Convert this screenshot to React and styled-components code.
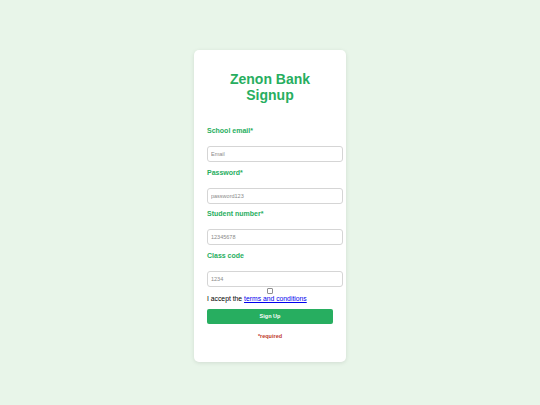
import React from "react";
import styled, { createGlobalStyle } from "styled-components";

const Global = createGlobalStyle`
  html, body { margin: 0; padding: 0; }
  body {
    background: #e8f5e9;
    font-family: "Liberation Sans", Arial, sans-serif;
    width: 540px;
    height: 405px;
    overflow: hidden;
  }
`;

const Page = styled.div`
  display: flex;
  justify-content: center;
  padding-top: 50px;
`;

const Card = styled.form`
  width: 126px;
  padding: 21px 13px 22px;
  background: #ffffff;
  border-radius: 5px;
  box-shadow: 0 1px 4px rgba(0, 0, 0, 0.1);
`;

const Title = styled.h1`
  margin: 0 0 23px;
  text-align: center;
  color: #27ae60;
  font-size: 14px;
  line-height: 16px;
  font-weight: bold;
`;

const Label = styled.label`
  display: block;
  color: #27ae60;
  font-size: 7px;
  line-height: 10px;
  font-weight: bold;
  margin-bottom: 10px;
`;

const Field = styled.input`
  display: block;
  box-sizing: content-box;
  width: 128px;
  height: 14px;
  padding: 0 3px;
  margin: 0 0 5.7px;
  border: 1px solid #d5d5d5;
  border-radius: 3px;
  font-family: "Liberation Sans", Arial, sans-serif;
  font-size: 5.5px;
  color: #333;
  &::placeholder { color: #8a8a8a; }
`;

const CheckRow = styled.div`
  display: flex;
  justify-content: center;
  margin-top: -5px;
  height: 6px;
`;

const Check = styled.input`
  appearance: none;
  -webkit-appearance: none;
  box-sizing: border-box;
  width: 6px;
  height: 6px;
  margin: 0;
  padding: 0;
  border: 1px solid #8f8f8f;
  border-radius: 1px;
  background: #fff;
`;

const Accept = styled.div`
  font-size: 6.8px;
  line-height: 9px;
  font-weight: normal;
  color: #000;
  margin: 0 0 6px;
  a { color: #0000ee; text-decoration: underline; }
`;

const Button = styled.button`
  display: block;
  width: 126px;
  height: 15px;
  border: none;
  border-radius: 2px;
  background: #27ae60;
  color: #fff;
  font-family: "Liberation Sans", Arial, sans-serif;
  font-size: 5.5px;
  font-weight: bold;
  padding: 0;
`;

const Required = styled.div`
  margin-top: 9px;
  text-align: center;
  color: #c0392b;
  font-size: 5.5px;
  line-height: 7px;
  font-weight: bold;
`;

const fields = [
  { label: "School email*", placeholder: "Email" },
  { label: "Password*", placeholder: "password123" },
  { label: "Student number*", placeholder: "12345678" },
  { label: "Class code", placeholder: "1234" },
];

export default function App() {
  return (
    <>
      <Global />
      <Page>
        <Card onSubmit={(e) => e.preventDefault()}>
          <Title>
            Zenon Bank
            <br />
            Signup
          </Title>
          {fields.map((f) => (
            <React.Fragment key={f.label}>
              <Label>{f.label}</Label>
              <Field type="text" placeholder={f.placeholder} />
            </React.Fragment>
          ))}
          <CheckRow>
            <Check type="checkbox" />
          </CheckRow>
          <Accept>
            I accept the <a href="#terms">terms and conditions</a>
          </Accept>
          <Button type="submit">Sign Up</Button>
          <Required>*required</Required>
        </Card>
      </Page>
    </>
  );
}
